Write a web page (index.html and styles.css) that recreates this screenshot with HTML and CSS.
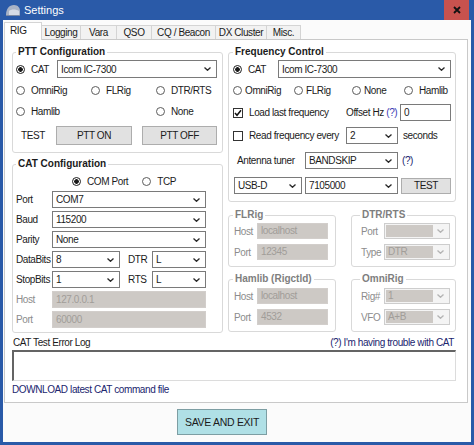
FILE: index.html
```html
<!DOCTYPE html>
<html lang="en">
  <head>
    <meta charset="UTF-8" />
    <title>Settings</title>
    <link rel="stylesheet" href="styles.css">
  </head>
  <body>
    <div class="window">
      <div class="titlebar">
        <svg class="appicon" width="16" height="14" viewBox="0 0 16 14">
          <path d="M1 12 C1 6 4 2 9 2 C13 2 15 5 15 8 L15 12 Z" fill="#a9b3c6" />
          <path d="M4 8 C6 6 11 6 14 8 L14 12 L4 12 Z" fill="#d6dbe5" />
          <path d="M1 12 L15 12 L15 13 L1 13 Z" fill="#7d8aa3" />
        </svg>
        <span class="title">Settings</span>
        <span class="close">
          <svg width="8" height="8" viewBox="0 0 8 8"><path d="M1 1 L7 7 M7 1 L1 7" stroke="#111" stroke-width="1.8" /></svg>
        </span>
      </div>

      <div class="client">
        <div class="tabs">
          <div class="tab active">RIG</div>
          <div class="tab t-logging">Logging</div>
          <div class="tab t-vara">Vara</div>
          <div class="tab t-qso">QSO</div>
          <div class="tab t-cq">CQ / Beacon</div>
          <div class="tab t-dx">DX Cluster</div>
          <div class="tab t-misc">Misc.</div>
        </div>

        <div class="page">
          <div class="cols">
            <div class="col-left">
              <!-- PTT -->
              <fieldset class="group ptt">
                <legend>PTT Configuration</legend>
                <div class="row r-first">
                  <label class="opt"><span class="radio on"></span>CAT</label>
                  <div class="combo w-ptt-rig"><span>Icom IC-7300</span><svg class="chev" width="7" height="4" viewBox="0 0 7 4"><path d="M0.5 0.5 L3.5 3.3 L6.5 0.5" /></svg></div>
                </div>
                <div class="row opts ptt-opts">
                  <label class="opt"><span class="radio"></span>OmniRig</label>
                  <label class="opt"><span class="radio"></span>FLRig</label>
                  <label class="opt"><span class="radio"></span>DTR/RTS</label>
                </div>
                <div class="row opts ptt-opts r-third">
                  <label class="opt"><span class="radio"></span>Hamlib</label>
                  <span></span>
                  <label class="opt"><span class="radio"></span>None</label>
                </div>
                <div class="row r-test">
                  <span class="test-label">TEST</span>
                  <button class="btn ptt-on">PTT ON</button>
                  <button class="btn ptt-off">PTT OFF</button>
                </div>
              </fieldset>

              <!-- CAT -->
              <fieldset class="group cat">
                <legend>CAT Configuration</legend>
                <div class="row conn">
                  <label class="opt"><span class="radio on"></span>COM Port</label>
                  <label class="opt tcp"><span class="radio"></span>TCP</label>
                </div>
                <div class="row cat-row">
                  <span class="lbl">Port</span>
                  <div class="combo w-cat"><span>COM7</span><svg class="chev" width="7" height="4" viewBox="0 0 7 4"><path d="M0.5 0.5 L3.5 3.3 L6.5 0.5" /></svg></div>
                </div>
                <div class="row cat-row">
                  <span class="lbl">Baud</span>
                  <div class="combo w-cat"><span>115200</span><svg class="chev" width="7" height="4" viewBox="0 0 7 4"><path d="M0.5 0.5 L3.5 3.3 L6.5 0.5" /></svg></div>
                </div>
                <div class="row cat-row">
                  <span class="lbl">Parity</span>
                  <div class="combo w-cat"><span>None</span><svg class="chev" width="7" height="4" viewBox="0 0 7 4"><path d="M0.5 0.5 L3.5 3.3 L6.5 0.5" /></svg></div>
                </div>
                <div class="row cat-row">
                  <span class="lbl">DataBits</span>
                  <div class="combo w-bits"><span>8</span><svg class="chev" width="7" height="4" viewBox="0 0 7 4"><path d="M0.5 0.5 L3.5 3.3 L6.5 0.5" /></svg></div>
                  <span class="lbl-line">DTR</span>
                  <div class="combo w-line"><span>L</span><svg class="chev" width="7" height="4" viewBox="0 0 7 4"><path d="M0.5 0.5 L3.5 3.3 L6.5 0.5" /></svg></div>
                </div>
                <div class="row cat-row">
                  <span class="lbl">StopBits</span>
                  <div class="combo w-bits"><span>1</span><svg class="chev" width="7" height="4" viewBox="0 0 7 4"><path d="M0.5 0.5 L3.5 3.3 L6.5 0.5" /></svg></div>
                  <span class="lbl-line">RTS</span>
                  <div class="combo w-line"><span>L</span><svg class="chev" width="7" height="4" viewBox="0 0 7 4"><path d="M0.5 0.5 L3.5 3.3 L6.5 0.5" /></svg></div>
                </div>
                <div class="row cat-row">
                  <span class="lbl off">Host</span>
                  <div class="field off w-cat">127.0.0.1</div>
                </div>
                <div class="row cat-row">
                  <span class="lbl off">Port</span>
                  <div class="field off w-cat">60000</div>
                </div>
              </fieldset>
            </div>

            <div class="col-right">
              <!-- Frequency -->
              <fieldset class="group freq">
                <legend>Frequency Control</legend>
                <div class="row r-first">
                  <label class="opt"><span class="radio on"></span>CAT</label>
                  <div class="combo w-freq-rig"><span>Icom IC-7300</span><svg class="chev" width="7" height="4" viewBox="0 0 7 4"><path d="M0.5 0.5 L3.5 3.3 L6.5 0.5" /></svg></div>
                </div>
                <div class="row opts freq-opts">
                  <label class="opt tight"><span class="radio"></span>OmniRig</label>
                  <label class="opt tight"><span class="radio"></span>FLRig</label>
                  <label class="opt tight"><span class="radio"></span>None</label>
                  <label class="opt"><span class="radio"></span>Hamlib</label>
                </div>
                <div class="row r-load">
                  <label class="opt chk-item"><span class="check on"><svg width="8" height="8" viewBox="0 0 8 8"><path d="M1 4 L3 6.3 L7 1.2" /></svg></span>Load last frequency</label>
                  <span class="offset">Offset Hz <a class="help">(?)</a></span>
                  <div class="field w-offset">0</div>
                </div>
                <div class="row r-read">
                  <label class="opt chk-item"><span class="check"></span>Read frequency every</label>
                  <div class="combo w-secs"><span>2</span><svg class="chev" width="7" height="4" viewBox="0 0 7 4"><path d="M0.5 0.5 L3.5 3.3 L6.5 0.5" /></svg></div>
                  <span class="secs">seconds</span>
                </div>
                <div class="row r-tuner">
                  <span class="tuner-label">Antenna tuner</span>
                  <div class="combo w-tuner"><span>BANDSKIP</span><svg class="chev" width="7" height="4" viewBox="0 0 7 4"><path d="M0.5 0.5 L3.5 3.3 L6.5 0.5" /></svg></div>
                  <a class="link tuner-help">(?)</a>
                </div>
                <div class="row r-mode">
                  <div class="combo w-mode"><span>USB-D</span><svg class="chev" width="7" height="4" viewBox="0 0 7 4"><path d="M0.5 0.5 L3.5 3.3 L6.5 0.5" /></svg></div>
                  <div class="combo w-tuner"><span>7105000</span><svg class="chev" width="7" height="4" viewBox="0 0 7 4"><path d="M0.5 0.5 L3.5 3.3 L6.5 0.5" /></svg></div>
                  <button class="btn test">TEST</button>
                </div>
              </fieldset>

              <div class="mini">
                <fieldset class="group small off">
                  <legend>FLRig</legend>
                  <div class="row mini-row">
                    <span class="lbl-mini">Host</span>
                    <div class="field off w-mini">localhost</div>
                  </div>
                  <div class="row mini-row">
                    <span class="lbl-mini">Port</span>
                    <div class="field off w-mini">12345</div>
                  </div>
                </fieldset>

                <fieldset class="group small off wide-pad">
                  <legend>DTR/RTS</legend>
                  <div class="row mini-row">
                    <span class="lbl-mini">Port</span>
                    <div class="combo off w-mini-combo"><span></span><svg class="chev" width="7" height="4" viewBox="0 0 7 4"><path d="M0.5 0.5 L3.5 3.3 L6.5 0.5" /></svg></div>
                  </div>
                  <div class="row mini-row">
                    <span class="lbl-mini">Type</span>
                    <div class="combo off w-mini-combo"><span>DTR</span><svg class="chev" width="7" height="4" viewBox="0 0 7 4"><path d="M0.5 0.5 L3.5 3.3 L6.5 0.5" /></svg></div>
                  </div>
                </fieldset>

                <fieldset class="group small off">
                  <legend>Hamlib (Rigctld)</legend>
                  <div class="row mini-row first-low">
                    <span class="lbl-mini">Host</span>
                    <div class="field off w-mini">localhost</div>
                  </div>
                  <div class="row mini-row">
                    <span class="lbl-mini">Port</span>
                    <div class="field off w-mini">4532</div>
                  </div>
                </fieldset>

                <fieldset class="group small off wide-pad">
                  <legend>OmniRig</legend>
                  <div class="row mini-row first-low">
                    <span class="lbl-mini">Rig#</span>
                    <div class="combo off w-mini-combo"><span>1</span><svg class="chev" width="7" height="4" viewBox="0 0 7 4"><path d="M0.5 0.5 L3.5 3.3 L6.5 0.5" /></svg></div>
                  </div>
                  <div class="row mini-row">
                    <span class="lbl-mini">VFO</span>
                    <div class="combo off w-mini-combo"><span>A+B</span><svg class="chev" width="7" height="4" viewBox="0 0 7 4"><path d="M0.5 0.5 L3.5 3.3 L6.5 0.5" /></svg></div>
                  </div>
                </fieldset>
              </div>
            </div>
          </div>

          <div class="log">
            <div class="log-head">
              <span>CAT Test Error Log</span>
              <a class="link">(?) I'm having trouble with CAT</a>
            </div>
            <div class="log-box"></div>
            <a class="link download">DOWNLOAD latest CAT command file</a>
          </div>
        </div>

        <div class="footer">
          <button class="save">SAVE AND EXIT</button>
        </div>
      </div>
    </div>
  </body>
</html>
```

FILE: styles.css
```css
* {
  box-sizing: border-box;
}

body {
  margin: 0;
  width: 474px;
  height: 445px;
  overflow: hidden;
  background-color: #2a5aa8;
  font-family: "Liberation Sans", Arial, sans-serif;
  font-size: 10px;
  letter-spacing: -0.4px;
  line-height: 13px;
  color: #1b1b1b;
}

.window {
  display: flex;
  flex-direction: column;
  height: 445px;
}

/* title bar */
.titlebar {
  flex: none;
  height: 20px;
  display: flex;
  align-items: center;
}

.appicon {
  margin-left: 5px;
}

.title {
  margin-left: 3px;
  color: #fff;
  font-size: 11px;
  letter-spacing: 0;
}

.close {
  margin-left: auto;
  margin-right: 5px;
  width: 25px;
  height: 20px;
  background-color: #c8524e;
  display: flex;
  align-items: center;
  justify-content: center;
}

/* client area */
.client {
  flex: 1;
  margin: 0 3px 3px 3px;
  background-color: #fbfbfb;
  display: flex;
  flex-direction: column;
}

.tabs {
  flex: none;
  height: 19px;
  display: flex;
  align-items: flex-end;
  padding-left: 1px;
}

.tab {
  height: 14px;
  border: 1px solid #d4d4d4;
  border-bottom: none;
  border-right: none;
  background-color: #f2f2f2;
  text-align: center;
  line-height: 13px;
  white-space: nowrap;
}

.tab.active {
  position: relative;
  z-index: 1;
  width: 38px;
  height: 18px;
  margin-bottom: -1px;
  margin-right: -1px;
  padding-left: 5px;
  text-align: left;
  line-height: 15px;
  border-right: 1px solid #d4d4d4;
  background-color: #fff;
}

.t-logging { width: 39px; }
.t-vara { width: 36px; }
.t-qso { width: 35px; }
.t-cq { width: 64px; }
.t-dx { width: 51px; }
.t-misc { width: 35px; border-right: 1px solid #d4d4d4; }

.page {
  flex: none;
  width: 464px;
  height: 364px;
  margin-left: 1px;
  border: 1px solid #c9c9c9;
  background-color: #fff;
  padding: 6px 0 0 7px;
}

.cols {
  display: flex;
  gap: 5px;
  height: 287px;
}

.col-left {
  width: 211px;
  display: flex;
  flex-direction: column;
  gap: 5px;
}

.col-right {
  width: 228px;
  display: flex;
  flex-direction: column;
}

/* group boxes */
.group {
  margin: 0;
  min-width: 0;
  border: 1px solid #d9d9d9;
  border-radius: 3px;
  padding: 0 5px 0 3px;
}

.group legend {
  padding: 0 2px;
  margin-left: 0;
  height: 12px;
  font-weight: bold;
  font-size: 10px;
  letter-spacing: 0;
  line-height: 12px;
  color: #1b1b1b;
}

.group.off legend {
  color: #7e7e7e;
}

.ptt { height: 107px; }
.cat { height: 175px; }
.freq { height: 156px; padding: 0 4px 0 4px; }

.row {
  display: flex;
  align-items: center;
  white-space: nowrap;
}

.r-first {
  margin-top: 2px;
  height: 18px;
}

.opts {
  display: grid;
  height: 20px;
  align-items: center;
}

.ptt-opts {
  margin-top: 2px;
  grid-template-columns: 75px 65px auto;
}

.r-third {
  margin-top: 1px;
}

.r-test {
  margin-top: 4px;
  height: 21px;
}

.test-label {
  width: 40px;
  padding-left: 5px;
}

/* options */
.opt {
  display: inline-flex;
  align-items: center;
  gap: 6px;
  white-space: nowrap;
}

.opt.tight {
  gap: 3px;
}

.radio {
  flex: none;
  width: 9px;
  height: 9px;
  border: 1px solid #5c5c5c;
  border-radius: 50%;
  background-color: #fff;
}

.radio.on {
  border-color: #1e1e1e;
  background: radial-gradient(circle, #1a1a1a 0 2px, #fff 2.6px);
}

.check {
  flex: none;
  width: 10px;
  height: 10px;
  border: 1px solid #333;
  background-color: #fff;
  display: flex;
  align-items: center;
  justify-content: center;
}

.check svg path {
  fill: none;
  stroke: #111;
  stroke-width: 1.5;
}

/* combo boxes and fields */
.combo {
  flex: none;
  display: flex;
  align-items: center;
  height: 18px;
  border: 1px solid #7a7a7a;
  background-color: #fff;
  padding-left: 3px;
  white-space: nowrap;
}

.combo span {
  flex: 1;
}

.chev {
  flex: none;
  margin-right: 5px;
}

.chev path {
  fill: none;
  stroke: #2a2a2a;
  stroke-width: 1.3;
}

.combo.off {
  border-color: #cdcdcd;
  background-color: #f4f4f4;
  padding: 1px;
  align-items: stretch;
}

.combo.off span {
  background-color: #cdc9c5;
  color: #a19d99;
  padding-left: 2px;
  margin-right: 4px;
  line-height: 12px;
}

.combo.off .chev {
  align-self: center;
  margin-right: 4px;
}

.combo.off .chev path {
  stroke: #b4b4b4;
}

.field {
  flex: none;
  height: 17px;
  border: 1px solid #7a7a7a;
  background-color: #fff;
  padding-left: 3px;
  line-height: 15px;
}

.field.off {
  border-color: #d2cecb;
  background-color: #cdc9c5;
  color: #a19d99;
}

.btn {
  flex: none;
  font: inherit;
  letter-spacing: inherit;
  color: #1b1b1b;
  padding: 0;
  border: 1px solid #adadad;
  background-color: #e1e1e1;
}

.ptt-on { width: 76px; height: 19px; }
.ptt-off { width: 75px; height: 19px; margin-left: 10px; }

.w-ptt-rig { width: 160px; margin-left: auto; }

/* CAT configuration */
.conn {
  margin-top: 4px;
  height: 14px;
  padding-left: 56px;
}

.tcp {
  margin-left: 14px;
}

.cat-row {
  margin-top: 3px;
  height: 17px;
}

.cat-row .combo,
.cat-row .field {
  height: 17px;
}

.lbl {
  width: 36px;
}

.lbl.off {
  color: #8c8c8c;
}

.w-cat { width: 154px; }
.w-bits { width: 68px; }
.w-line { width: 54px; }

.lbl-line {
  width: 24px;
  margin-left: 8px;
}

/* frequency control */
.w-freq-rig { width: 173px; margin-left: auto; }

.freq-opts {
  margin-top: 2px;
  grid-template-columns: 61px 58px 52px auto;
}

.r-load {
  margin-top: 4px;
  height: 17px;
}

.chk-item {
  width: 113px;
}

.offset {
  width: 54px;
  white-space: nowrap;
}

.help {
  color: #3b3bb4;
}

.w-offset { width: 51px; }

.r-read {
  margin-top: 6px;
  height: 17px;
}

.w-secs { width: 52px; height: 17px; }

.secs {
  margin-left: 5px;
}

.r-tuner {
  margin-top: 8px;
  height: 17px;
}

.tuner-label {
  width: 72px;
  padding-left: 4px;
}

.w-tuner { width: 93px; height: 17px; margin-left: 0; }

.tuner-help {
  margin-left: 4px;
}

.r-mode {
  margin-top: 8px;
  height: 17px;
}

.w-mode { width: 68px; height: 17px; margin-left: 1px; margin-right: 3px; }

.test {
  width: 50px;
  height: 16px;
  margin-left: 3px;
}

/* small disabled groups */
.mini {
  margin-top: 7px;
  display: grid;
  grid-template-columns: 108px 105px;
  grid-template-rows: 58px 59px;
  column-gap: 15px;
  row-gap: 6px;
}

.small {
  padding: 0 4px 0 4px;
}

.small.wide-pad {
  padding-left: 8px;
}

.mini-row {
  margin-top: 2px;
  height: 16px;
}

.mini-row + .mini-row {
  margin-top: 5px;
}

.mini-row.first-low {
  margin-top: 3px;
}

.lbl-mini {
  width: 24px;
  padding-left: 1px;
  color: #8c8c8c;
}

.w-mini { width: 71px; height: 16px; line-height: 14px; }
.w-mini-combo { width: 66px; height: 16px; }

/* error log */
.log {
  margin-top: 2px;
  width: 444px;
}

.log-head {
  display: flex;
  justify-content: space-between;
  align-items: center;
  height: 14px;
  padding: 0 2px 0 1px;
}

.link {
  color: #20256e;
}

.log-box {
  margin-top: 1px;
  height: 31px;
  border-top: 2px solid #646464;
  border-left: 2px solid #646464;
  border-right: 1px solid #dcdcdc;
  border-bottom: 1px solid #dcdcdc;
  background-color: #fff;
}

.download {
  display: block;
  margin-top: 2px;
  height: 14px;
  line-height: 14px;
}

/* footer */
.footer {
  flex: 1;
  padding: 6px 0 0 174px;
}

.save {
  width: 90px;
  height: 26px;
  padding: 0;
  font: inherit;
  font-size: 10.5px;
  letter-spacing: -0.3px;
  color: #1b1b1b;
  background-color: #b0e0e6;
  border: 1px solid #7d9ea3;
}
```
